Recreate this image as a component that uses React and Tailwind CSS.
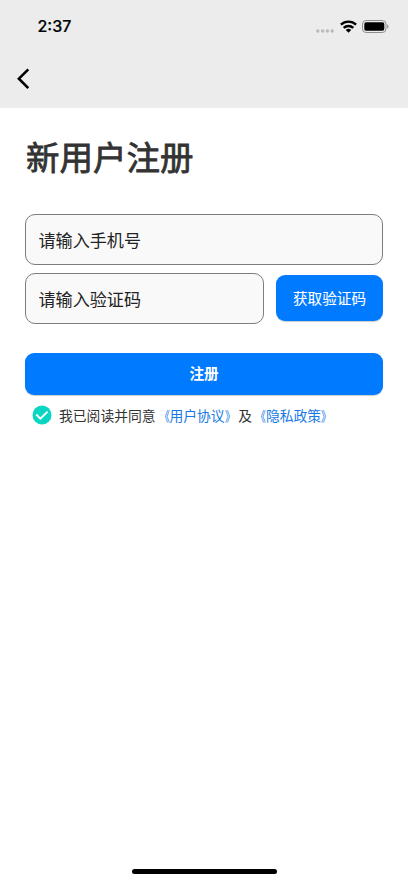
import { useState } from "react";

const FIELD =
  "h-[51px] rounded-[10px] border border-[#7d7d7d] bg-[#f9f9f9] px-[12.5px] pt-[2px] text-[17.1px] text-[#222] outline-none placeholder:text-[#222] placeholder:opacity-100";

export default function App() {
  const [agreed, setAgreed] = useState(true);
  const [phone, setPhone] = useState("");
  const [code, setCode] = useState("");

  return (
    <div className="flex h-[883px] w-full flex-col bg-white font-['Inter','Noto_Sans_CJK_SC',sans-serif] text-[#333]">
      <header className="h-[108px] bg-[#ececec] text-black">
        <StatusBar />
        <button aria-label="返回" className="mt-[15px] ml-[17px] block">
          <svg width="13" height="22" viewBox="0 0 13 22" fill="none" stroke="currentColor" strokeWidth="2.6">
            <path d="M11.3 1.3 1.9 10.7l9.4 9.4" />
          </svg>
        </button>
      </header>

      <main className="flex flex-col px-[25px]">
        <h1 className="mt-[25px] pl-px text-[33.5px] leading-[50px] [-webkit-text-stroke:0.8px_#333]">新用户注册</h1>

        <input
          className={`${FIELD} mt-[31px] w-full`}
          placeholder="请输入手机号"
          value={phone}
          onChange={(e) => setPhone(e.target.value)}
        />

        <div className="mt-2 flex items-center gap-3">
          <input
            className={`${FIELD} min-w-0 flex-1`}
            placeholder="请输入验证码"
            value={code}
            onChange={(e) => setCode(e.target.value)}
          />
          <button className="mb-px h-[46px] w-[107px] rounded-[9px] bg-[#007aff] pt-[3px] text-[14.6px] text-white shadow-[0_1px_1px_rgba(0,0,0,0.2)] [-webkit-text-stroke:0.1px_white]">
            获取验证码
          </button>
        </div>

        <button className="mt-[28.5px] h-[42px] rounded-[9px] bg-[#007aff] pt-[3px] text-[14.6px] font-bold text-white shadow-[0_1px_1px_rgba(0,0,0,0.2)]">
          注册
        </button>

        {/* Agreement */}
        <div className="mt-[10px] flex items-start pl-[7px]">
          <button aria-label="同意协议" aria-pressed={agreed} onClick={() => setAgreed(!agreed)}>
            <svg width="20" height="20" viewBox="0 0 20 20" fill="none">
              <circle cx="10" cy="10" r="9.5" fill={agreed ? "#08d6c2" : "#ccc"} />
              <path d="m4.2 9.5 4.2 4.1 7.2-7" stroke="white" strokeWidth="2" />
            </svg>
          </button>
          <p className="ml-[7px] pt-[1.5px] text-[13.8px] leading-5 whitespace-nowrap">
            我已阅读并同意<PolicyLink>用户协议</PolicyLink>及<PolicyLink>隐私政策</PolicyLink>
          </p>
        </div>
      </main>

      <div className="mx-auto mt-auto mb-[9px] h-[5px] w-[145px] rounded-full bg-black" />
    </div>
  );
}

// Title marks are drawn condensed so they sit close to the name
function PolicyLink({ children }) {
  return (
    <a className="text-[#1679e8]">
      <span className="inline-block origin-right scale-x-75">《</span>
      {children}
      <span className="inline-block origin-left scale-x-75">》</span>
    </a>
  );
}

function StatusBar() {
  return (
    <div className="flex h-[53px] items-center justify-between pr-[19px] pl-[37.5px]">
      <span className="pb-px text-[16px] font-medium [-webkit-text-stroke:0.2px_black]">2:37</span>
      <div className="flex items-center">
        <svg width="18" height="4" viewBox="0 0 18 4" fill="#b9b9b9" className="mt-[8px]">
          <circle cx="1.8" cy="2" r="1.7" />
          <circle cx="6.6" cy="2" r="1.7" />
          <circle cx="11.4" cy="2" r="1.7" />
          <circle cx="16.2" cy="2" r="1.7" />
        </svg>
        <svg width="17" height="13" viewBox="0 0 17 13" fill="none" stroke="black" strokeWidth="2.4" className="ml-[6px]">
          <path d="M0.9 4.7a10.9 10.9 0 0 1 15.2 0" />
          <path d="M3.7 7.9a6.9 6.9 0 0 1 9.6 0" />
          <path d="M8.5 12.7 5.8 10.1a3.9 3.9 0 0 1 5.4 0Z" fill="black" stroke="none" />
        </svg>
        <svg width="27" height="13" viewBox="0 0 27 13" className="ml-[5px]">
          <rect x="0.5" y="0.5" width="23.5" height="12" rx="3.6" fill="none" stroke="#8e8e8e" />
          <rect x="2.3" y="2.3" width="20" height="8.4" rx="1.8" fill="black" />
          <path d="M25.2 4.5c1.7.5 1.7 3.5 0 4Z" fill="#8e8e8e" />
        </svg>
      </div>
    </div>
  );
}
